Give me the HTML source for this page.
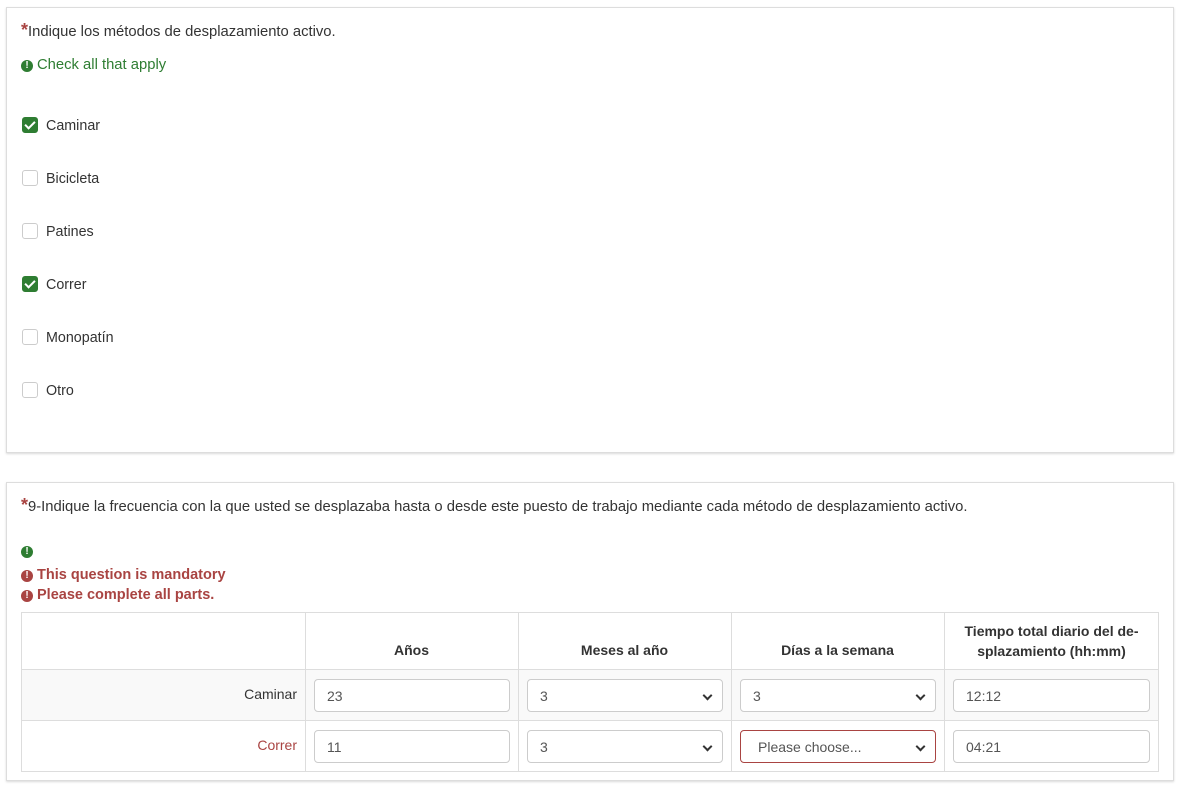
<!DOCTYPE html>
<html><head><meta charset="utf-8"><style>
*{box-sizing:border-box;margin:0;padding:0}
body{width:1181px;height:788px;background:#fff;font-family:"Liberation Sans",sans-serif;font-size:14px;color:#333;position:relative;overflow:hidden}
.panel{position:absolute;left:6px;width:1168px;border:1px solid #ddd;box-shadow:0 1px 2px rgba(0,0,0,.15);background:#fff}
.abs{position:absolute;white-space:nowrap}
.q{font-size:14.8px}
.star{color:#a94442;font-weight:bold;font-size:18px}
.ic{display:inline-block;width:12px;height:12px;border-radius:50%;color:#fff;font-size:10px;font-weight:bold;text-align:center;line-height:12px;vertical-align:0px;margin-right:4px;position:relative;top:-1px}
.g{background:#2e7d32}.r{background:#a94442}
.cb{position:absolute;left:22px;width:16px;height:16px;border:1px solid #ccc;border-radius:3px;background:#fff}
.cb.on{background:#2e7d32;border-color:#2e7d32}
.cb.on::after{content:"";position:absolute;left:4px;top:1px;width:4px;height:8px;border:solid #fff;border-width:0 2px 2px 0;transform:rotate(45deg)}
.lbl{position:absolute;left:46px;font-size:14.3px}
.vl{position:absolute;background:#ddd;width:1px}
.hl{position:absolute;background:#ddd;height:1px}
.inp{position:absolute;height:33px;border:1px solid #ccc;border-radius:4px;background:#fff;padding:8px 12px;font-size:14px;color:#555}
.sel::after{content:"";position:absolute;right:11px;top:12px;width:5px;height:5px;border:solid #333;border-width:0 2px 2px 0;transform:rotate(45deg)}
.th{position:absolute;font-weight:bold;text-align:center;font-size:14px;color:#333}
</style></head><body>
<div class="panel" style="top:7px;height:446px"></div>
<div class="abs q" style="left:21px;top:20px"><span class="star">*</span>Indique los métodos de desplazamiento activo.</div>
<div class="abs q" style="left:21px;top:57px;color:#2e7d32"><span class="ic g">!</span>Check all that apply</div>
<div class="cb on" style="top:117px"></div><div class="lbl" style="top:118px">Caminar</div>
<div class="cb" style="top:170px"></div><div class="lbl" style="top:171px">Bicicleta</div>
<div class="cb" style="top:223px"></div><div class="lbl" style="top:224px">Patines</div>
<div class="cb on" style="top:276px"></div><div class="lbl" style="top:277px">Correr</div>
<div class="cb" style="top:329px"></div><div class="lbl" style="top:330px">Monopatín</div>
<div class="cb" style="top:382px"></div><div class="lbl" style="top:383px">Otro</div>

<div class="panel" style="top:482px;height:299px"></div>
<div class="abs q" style="left:21px;top:495px"><span class="star">*</span>9-Indique la frecuencia con la que usted se desplazaba hasta o desde este puesto de trabajo mediante cada método de desplazamiento activo.</div>
<div class="abs" style="left:21px;top:542px"><span class="ic g">!</span></div>
<div class="abs" style="left:21px;top:567px;color:#a94442;font-weight:bold;font-size:14.5px"><span class="ic r">!</span>This question is mandatory</div>
<div class="abs" style="left:21px;top:587px;color:#a94442;font-weight:bold;font-size:14.5px"><span class="ic r">!</span>Please complete all parts.</div>

<div style="position:absolute;left:21px;top:669px;width:1138px;height:51px;background:#f9f9f9"></div>
<div style="position:absolute;left:21px;top:612px;width:1138px;height:160px;border:1px solid #ddd"></div>
<div class="hl" style="left:21px;top:669px;width:1138px"></div>
<div class="hl" style="left:21px;top:720px;width:1138px"></div>
<div class="vl" style="left:305px;top:612px;height:160px"></div>
<div class="vl" style="left:518px;top:612px;height:160px"></div>
<div class="vl" style="left:731px;top:612px;height:160px"></div>
<div class="vl" style="left:944px;top:612px;height:160px"></div>
<div class="th" style="left:305px;width:213px;top:642px">Años</div>
<div class="th" style="left:518px;width:213px;top:642px">Meses al año</div>
<div class="th" style="left:731px;width:213px;top:642px">Días a la semana</div>
<div class="th" style="left:944px;width:215px;top:621px;line-height:20px">Tiempo total diario del de-<br>splazamiento (hh:mm)</div>
<div class="abs" style="right:884px;top:686px">Caminar</div>
<div class="abs" style="right:884px;top:737px;color:#a94442">Correr</div>
<div class="inp" style="left:314px;top:679px;width:196px">23</div>
<div class="inp sel" style="left:527px;top:679px;width:196px">3</div>
<div class="inp sel" style="left:740px;top:679px;width:196px">3</div>
<div class="inp" style="left:953px;top:679px;width:197px">12:12</div>
<div class="inp" style="left:314px;top:730px;width:196px">11</div>
<div class="inp sel" style="left:527px;top:730px;width:196px">3</div>
<div class="inp sel" style="left:740px;top:730px;width:196px;border-color:#a94442;padding-left:17px">Please choose...</div>
<div class="inp" style="left:953px;top:730px;width:197px">04:21</div>
</body></html>
